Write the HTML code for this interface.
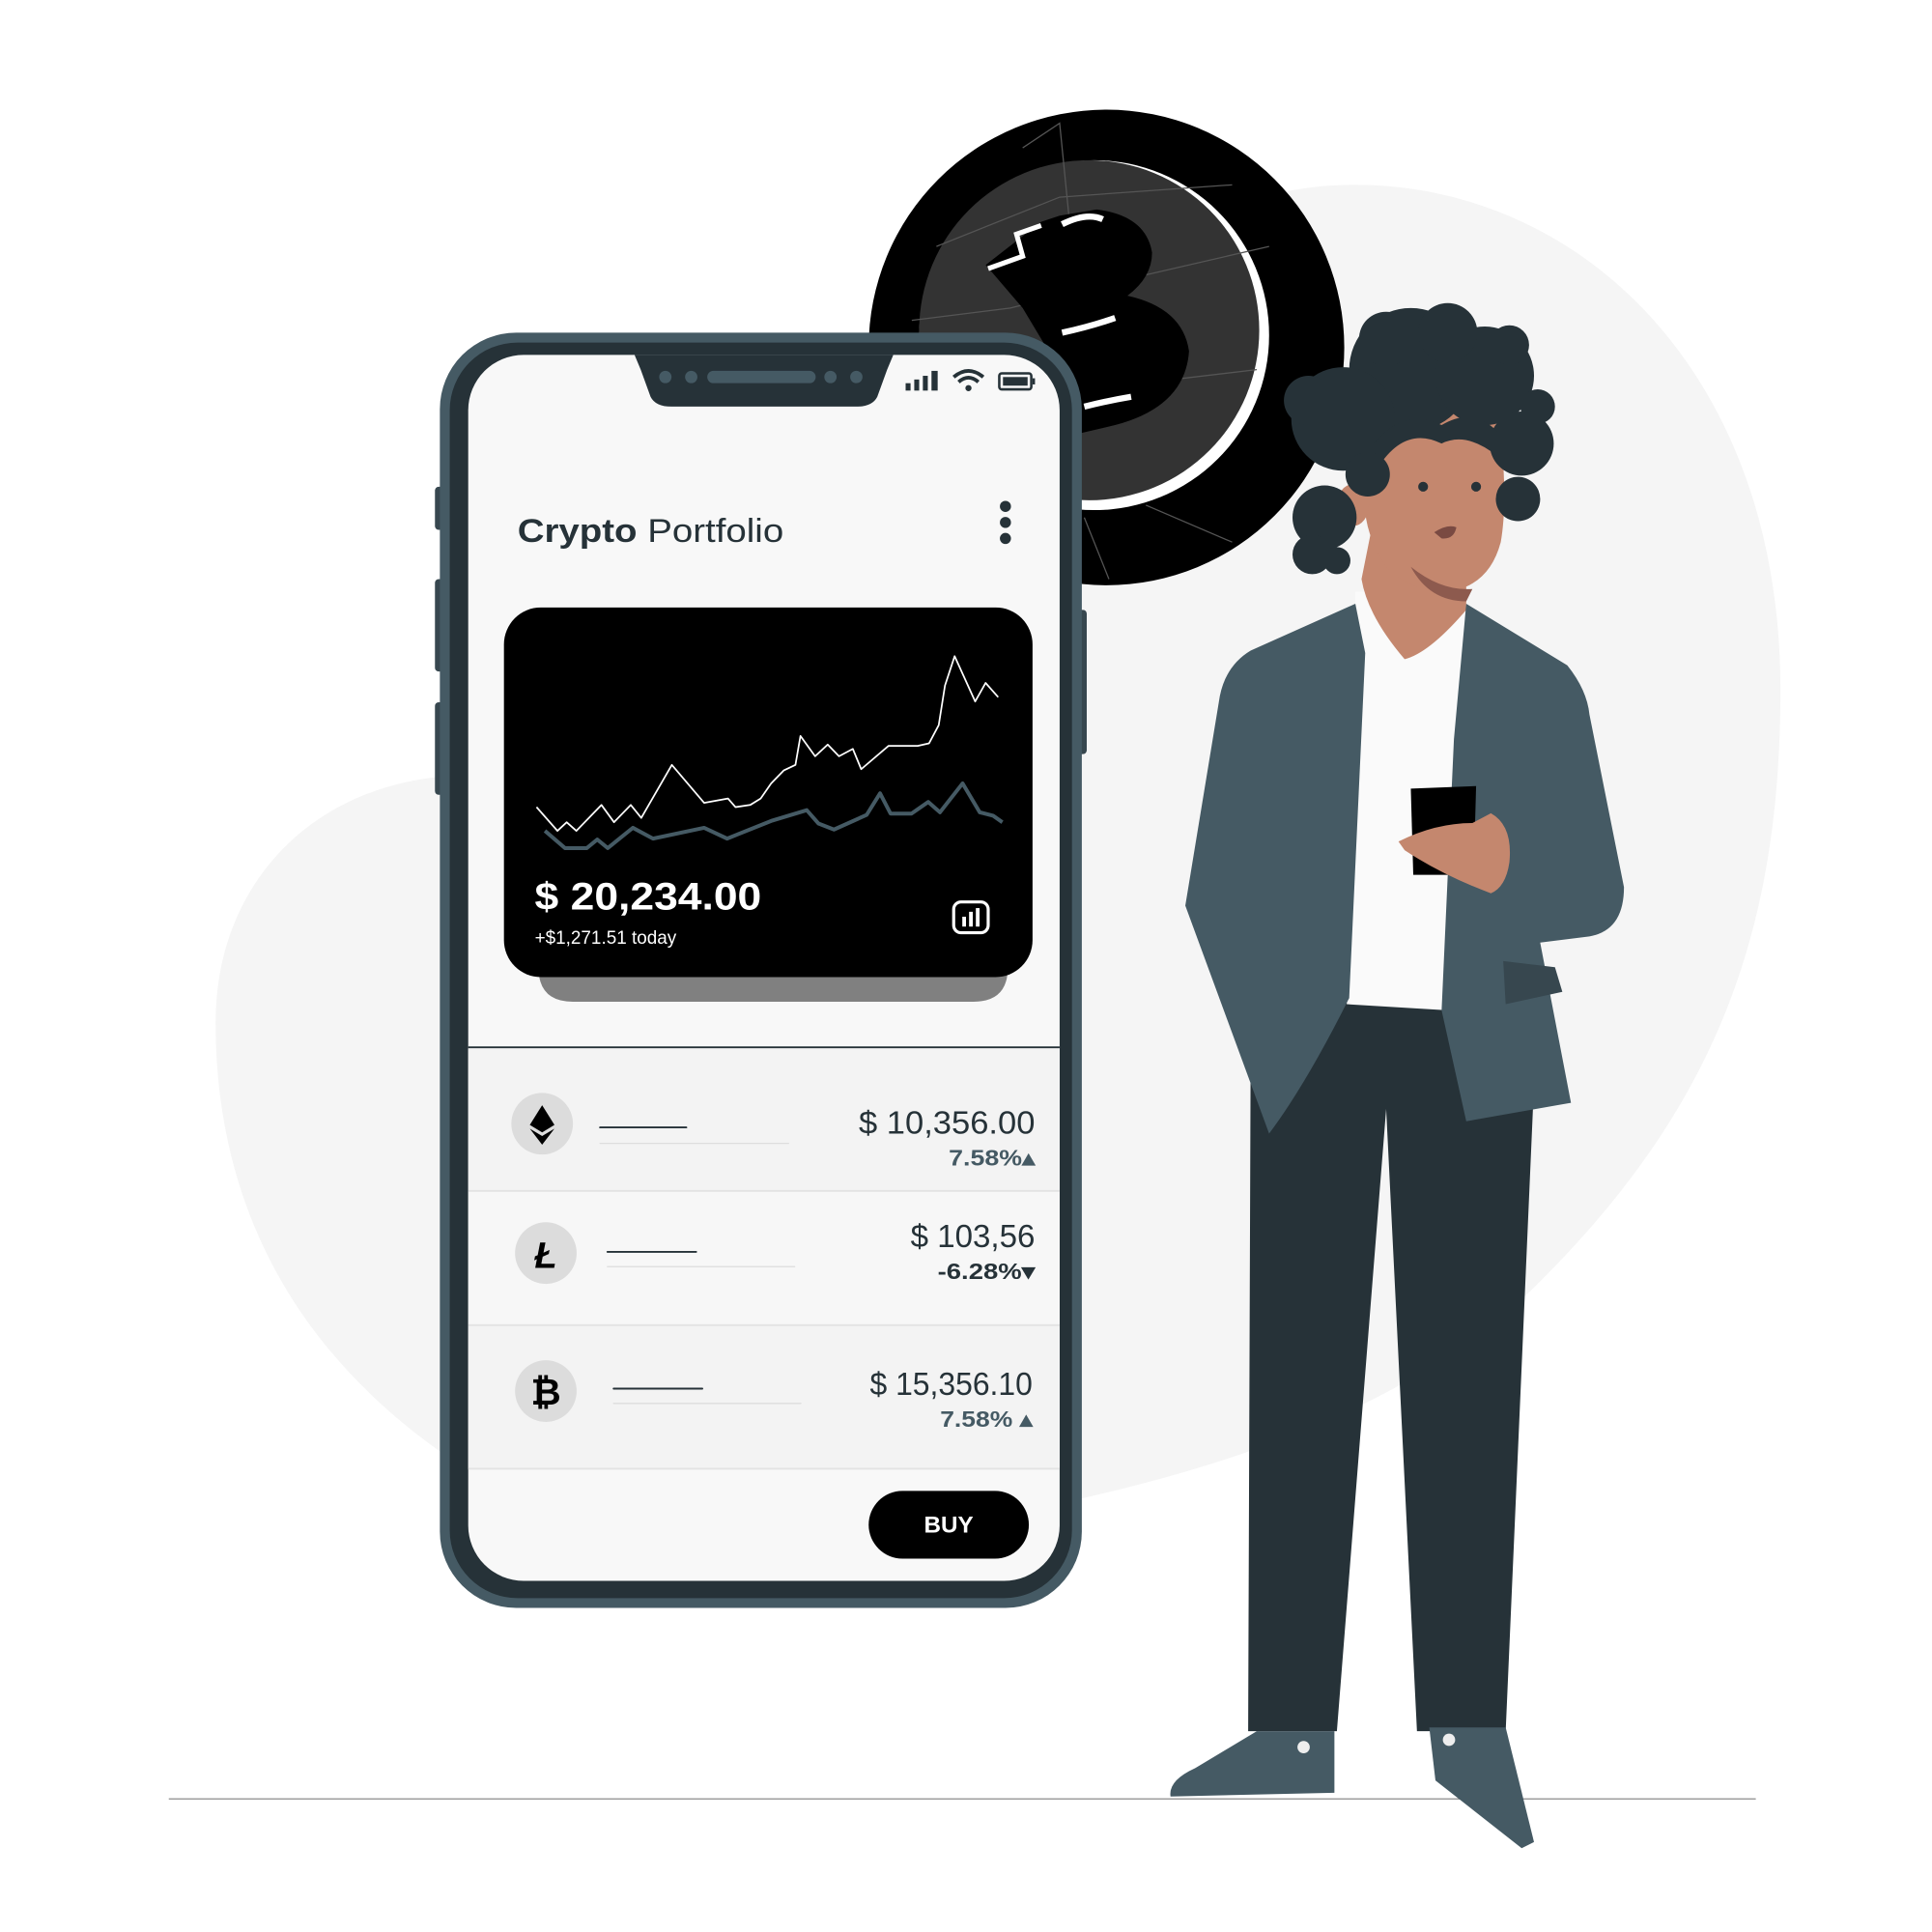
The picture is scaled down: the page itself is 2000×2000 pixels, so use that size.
<!DOCTYPE html>
<html><head><meta charset="utf-8"><style>
html,body{margin:0;padding:0;background:#fff;}
svg{display:block;}
text{font-family:"Liberation Sans",sans-serif;}
</style></head><body>
<svg width="2000" height="2000" viewBox="0 0 1568 1568" xmlns="http://www.w3.org/2000/svg">
<rect width="1568" height="1568" fill="#ffffff"/>
<path d="M360 630 C250 640 175 720 175 830 C175 1000 260 1110 360 1180 L860 1220 C1000 1190 1150 1140 1250 1040 C1390 900 1445 760 1445 560 C1445 300 1280 150 1100 150 C960 150 900 240 870 330 L800 560 C700 620 500 620 360 630 Z" fill="#f5f5f5"/>
<line x1="137" y1="1460" x2="1425" y2="1460" stroke="#9e9e9e" stroke-width="1.2"/>
<circle cx="898" cy="282" r="193" fill="#000"/>
<circle cx="888" cy="272" r="142" fill="#fff"/>
<circle cx="884" cy="268" r="138" fill="#333"/>
<g stroke="#555" stroke-width="1" fill="none">
<path d="M760 200 L860 160 L1000 150"/><path d="M740 260 L820 250 L900 230 L1030 200"/><path d="M760 340 L850 320 L1020 300"/><path d="M830 120 L860 100 L870 200"/><path d="M880 420 L900 470"/><path d="M930 410 L1000 440"/>
</g>
<path d="M800 215 L845 180 L860 175 L890 170 Q930 175 935 205 Q935 225 915 240 Q960 250 965 285 Q962 330 905 345 L875 352 L860 300 L830 250 Z" fill="#000"/>
<path d="M862 182 Q882 172 895 178" stroke="#fff" stroke-width="5" fill="none"/>
<path d="M862 270 Q885 265 905 258" stroke="#fff" stroke-width="5" fill="none"/>
<path d="M880 330 Q900 325 918 322" stroke="#fff" stroke-width="5" fill="none"/>
<path d="M802 218 L830 208 L825 190 L845 183" stroke="#fff" stroke-width="4" fill="none"/>
<rect x="353" y="395" width="8" height="35" rx="3" fill="#37474f"/>
<rect x="353" y="470" width="8" height="75" rx="3" fill="#37474f"/>
<rect x="353" y="570" width="8" height="75" rx="3" fill="#37474f"/>
<rect x="874" y="495" width="8" height="117" rx="3" fill="#37474f"/>
<rect x="357" y="270" width="521" height="1035" rx="62" fill="#455a64"/>
<rect x="365" y="278" width="505" height="1019" rx="55" fill="#263238"/>
<rect x="380" y="288" width="480" height="995" rx="45" fill="#f8f8f8"/>
<path d="M515 288 L520 300 L528 322 Q532 330 545 330 L695 330 Q708 330 712 322 L720 300 L725 288 Z" fill="#263238"/>
<circle cx="540" cy="306" r="5" fill="#455a64"/><circle cx="561" cy="306" r="5" fill="#455a64"/>
<rect x="574" y="301" width="88" height="10" rx="5" fill="#455a64"/>
<circle cx="674" cy="306" r="5" fill="#455a64"/><circle cx="695" cy="306" r="5" fill="#455a64"/>
<g fill="#263238"><rect x="735" y="311" width="4" height="6"/><rect x="742" y="308" width="4" height="9"/><rect x="749" y="305" width="4" height="12"/><rect x="756" y="301" width="5" height="16"/></g>
<path d="M774 306 Q786 296 798 306 M778 310 Q786 303 794 310" stroke="#263238" stroke-width="3" fill="none"/><circle cx="786" cy="315" r="2.5" fill="#263238"/>
<rect x="811" y="303" width="26" height="13" rx="2" fill="none" stroke="#263238" stroke-width="2"/><rect x="814" y="306" width="20" height="7" fill="#263238"/><rect x="838" y="307" width="2" height="5" fill="#263238"/>
<text x="420" y="440" font-size="27" fill="#263238" textLength="216" lengthAdjust="spacingAndGlyphs"><tspan font-weight="bold">Crypto</tspan> Portfolio</text>
<circle cx="816" cy="411" r="4.5" fill="#263238"/><circle cx="816" cy="424" r="4.5" fill="#263238"/><circle cx="816" cy="437" r="4.5" fill="#263238"/>
<path d="M437 760 L818 760 L818 785 Q818 813 790 813 L465 813 Q437 813 437 785 Z" fill="#808080"/>
<rect x="409" y="493" width="429" height="300" rx="30" fill="#000"/>
<g transform="translate(360.65,266.56) scale(0.34,0.35)" fill="none" stroke-linejoin="round">
<polyline stroke="#fff" stroke-width="4" points="220,1110 270,1165 292,1145 315,1165 375,1105 405,1145 445,1105 470,1135 543,1012 620,1100 677,1090 695,1110 730,1105 755,1090 780,1055 810,1025 838,1012 850,945 885,992 915,965 942,992 975,975 995,1022 1060,968 1130,968 1157,962 1180,920 1195,828 1218,760 1267,865 1292,822 1322,855"/>
<polyline stroke="#455a64" stroke-width="9" points="240,1165 288,1205 340,1205 365,1185 390,1205 450,1158 498,1183 620,1158 675,1183 780,1142 865,1117 893,1148 930,1162 1008,1128 1040,1078 1065,1125 1115,1125 1155,1098 1183,1122 1237,1055 1278,1122 1310,1130 1332,1145"/>
</g>
<text x="434" y="738" font-size="31" font-weight="bold" fill="#fff" textLength="184" lengthAdjust="spacingAndGlyphs">$ 20,234.00</text>
<text x="434" y="766" font-size="15" fill="#fff" textLength="115" lengthAdjust="spacingAndGlyphs">+$1,271.51 today</text>
<rect x="774" y="732" width="28" height="25" rx="6" fill="none" stroke="#fff" stroke-width="2.5"/>
<g fill="#fff"><rect x="781" y="744" width="3" height="8"/><rect x="786.5" y="740" width="3" height="12"/><rect x="792" y="737" width="3" height="15"/></g>
<rect x="380" y="851" width="480" height="115" fill="#f3f3f3"/>
<rect x="380" y="967" width="480" height="108" fill="#f7f7f7"/>
<rect x="380" y="1076" width="480" height="116" fill="#f3f3f3"/>
<line x1="380" y1="850" x2="860" y2="850" stroke="#263238" stroke-width="1.5"/>
<line x1="380" y1="966.5" x2="860" y2="966.5" stroke="#e3e3e3" stroke-width="1.5"/>
<line x1="380" y1="1075.5" x2="860" y2="1075.5" stroke="#e3e3e3" stroke-width="1.5"/>
<line x1="380" y1="1192" x2="860" y2="1192" stroke="#e3e3e3" stroke-width="1.5"/>
<circle cx="440" cy="912" r="25" fill="#dcdcdc"/>
<path d="M440 897 L450 913 L440 919 L430 913 Z" fill="#000"/><path d="M430 916 L440 922 L450 916 L440 929 Z" fill="#000"/>
<circle cx="443" cy="1017" r="25" fill="#dcdcdc"/>
<text x="443" y="1029" font-size="30" font-weight="bold" font-style="italic" text-anchor="middle" fill="#000">Ł</text>
<circle cx="443" cy="1129" r="25" fill="#dcdcdc"/>
<text x="443" y="1140" font-size="30" font-weight="bold" text-anchor="middle" fill="#000">₿</text>
<g stroke-linecap="round">
<line x1="487" y1="915" x2="557" y2="915" stroke="#263238" stroke-width="1.5"/><line x1="487" y1="928" x2="640" y2="928" stroke="#ddd" stroke-width="1"/>
<line x1="493" y1="1016" x2="565" y2="1016" stroke="#263238" stroke-width="1.5"/><line x1="493" y1="1028" x2="645" y2="1028" stroke="#ddd" stroke-width="1"/>
<line x1="498" y1="1127" x2="570" y2="1127" stroke="#263238" stroke-width="1.5"/><line x1="498" y1="1139" x2="650" y2="1139" stroke="#ddd" stroke-width="1"/>
</g>
<text x="697" y="920" font-size="26" fill="#263238" textLength="143" lengthAdjust="spacingAndGlyphs">$ 10,356.00</text>
<text x="770" y="946" font-size="18" font-weight="bold" fill="#455a64" textLength="70" lengthAdjust="spacingAndGlyphs">7.58%▴</text>
<text x="739" y="1012" font-size="26" fill="#263238" textLength="101" lengthAdjust="spacingAndGlyphs">$ 103,56</text>
<text x="761" y="1038" font-size="18" font-weight="bold" fill="#263238" textLength="79" lengthAdjust="spacingAndGlyphs">-6.28%▾</text>
<text x="706" y="1132" font-size="26" fill="#263238" textLength="132" lengthAdjust="spacingAndGlyphs">$ 15,356.10</text>
<text x="763" y="1158" font-size="18" font-weight="bold" fill="#455a64" textLength="75" lengthAdjust="spacingAndGlyphs">7.58% ▴</text>
<rect x="705" y="1210" width="130" height="55" rx="27.5" fill="#000"/>
<text x="770" y="1244" font-size="19" font-weight="bold" fill="#fff" text-anchor="middle">BUY</text>
<path d="M1015 860 L1013 1405 L1085 1405 L1125 900 L1150 1405 L1222 1405 L1245 880 L1180 820 L1095 810 Z" fill="#263238"/>
<path d="M1020 1405 L1083 1405 L1083 1455 L950 1458 Q948 1445 970 1435 Z" fill="#455a64"/>
<circle cx="1058" cy="1418" r="5" fill="#eee"/>
<path d="M1160 1402 L1222 1402 L1245 1495 L1235 1500 L1165 1445 Z" fill="#455a64"/>
<circle cx="1176" cy="1412" r="5" fill="#eee"/>
<path d="M1100 480 L1190 480 L1195 600 L1175 820 L1093 815 L1100 530 Z" fill="#fafafa"/>
<path d="M1115 420 L1190 420 L1190 495 Q1160 530 1140 535 Q1110 500 1105 470 Z" fill="#c4876e"/>
<path d="M1100 490 L1015 528 Q995 540 990 565 L962 735 L1030 920 Q1060 880 1095 810 L1108 530 Z" fill="#455a64"/>
<path d="M1190 490 L1272 540 Q1288 560 1290 580 L1318 720 Q1318 755 1290 760 L1250 765 L1275 895 L1190 910 L1170 820 L1180 600 Z" fill="#455a64"/>
<path d="M1220 780 L1262 785 L1268 805 L1222 815 Z" fill="#37474f"/>
<path d="M1145 640 L1198 638 L1196 710 L1147 710 Z" fill="#000"/>
<path d="M1135 683 Q1165 668 1195 668 L1210 660 Q1228 670 1225 700 Q1222 720 1210 725 Q1170 710 1140 690 Z" fill="#c4876e"/>
<path d="M1118 360 Q1160 300 1215 330 Q1225 400 1218 440 Q1210 470 1185 478 Q1150 485 1125 460 Q1105 430 1108 400 Z" fill="#c4876e"/>
<ellipse cx="1098" cy="410" rx="13" ry="17" fill="#c4876e"/>
<path d="M1145 460 Q1170 480 1195 478 L1190 488 Q1160 488 1145 460 Z" fill="#8d5a4e"/>
<g fill="#263238">
<circle cx="1155" cy="395" r="4"/><circle cx="1198" cy="395" r="4"/>
<path d="M1164 432 Q1175 425 1182 428 Q1180 438 1170 437 Z" fill="#7a4a42"/>
<circle cx="1145" cy="300" r="50"/><circle cx="1090" cy="340" r="42"/><circle cx="1075" cy="420" r="26"/>
<circle cx="1205" cy="305" r="40"/><circle cx="1235" cy="360" r="26"/><circle cx="1232" cy="405" r="18"/>
<circle cx="1125" cy="275" r="22"/><circle cx="1175" cy="270" r="24"/><circle cx="1062" cy="325" r="20"/>
<circle cx="1065" cy="450" r="16"/><circle cx="1085" cy="455" r="11"/><circle cx="1248" cy="330" r="14"/>
<circle cx="1225" cy="280" r="16"/><circle cx="1110" cy="385" r="18"/>
</g>
<path d="M1115 360 Q1140 330 1170 345 Q1195 330 1215 350 L1215 370 Q1190 350 1170 360 Q1140 345 1118 380 Z" fill="#263238"/>
</svg>
</body></html>
